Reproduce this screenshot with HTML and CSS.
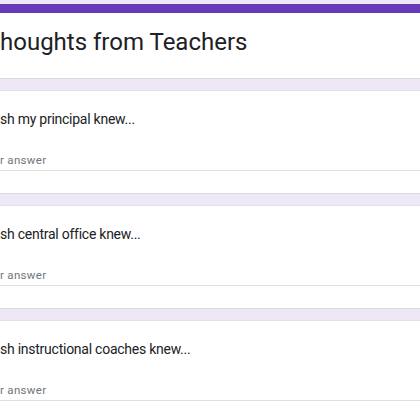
FILE: index.html
```html
<!DOCTYPE html>
<html>
<head>
<meta charset="utf-8">
<link rel="stylesheet" href="styles.css">
</head>
<body>
<main class="form">
  <section class="card header-card">
    <h1 class="title">houghts from Teachers</h1>
  </section>
  <section class="card question">
    <div class="q-text">sh my principal knew...</div>
    <div class="answer">r answer</div>
  </section>
  <section class="card question">
    <div class="q-text">sh central office knew...</div>
    <div class="answer">r answer</div>
  </section>
  <section class="card question">
    <div class="q-text">sh instructional coaches knew...</div>
    <div class="answer">r answer</div>
  </section>
</main>
</body>
</html>
```

FILE: styles.css
```css
html, body {
  margin: 0;
  padding: 0;
  background: #ede7f6;
  height: 100%;
  overflow: hidden;
}
.form {
  padding-top: 4px;
  display: flex;
  flex-direction: column;
  gap: 11px;
  font-family: Roboto, "Noto Sans", sans-serif;
}
.card {
  background: #fff;
  border-top: 1px solid #e4e2e8;
  border-bottom: 1px solid #dadce0;
}
.header-card {
  border-top: 9px solid #673ab7;
  height: 65px;
  box-sizing: content-box;
}
.title {
  margin: 0;
  padding-top: 14px;
  font-weight: 400;
  font-size: 24px;
  line-height: 30px;
  color: #202124;
}
.question {
  height: 104px;
  padding-top: 18px;
  box-sizing: border-box;
}
.q-text {
  font-size: 14px;
  line-height: 20px;
  letter-spacing: -0.25px;
  color: #202124;
}
.answer {
  margin-top: 23px;
  font-size: 11.5px;
  line-height: 16px;
  letter-spacing: 0.3px;
  color: #70757a;
  padding-bottom: 2px;
  border-bottom: 1px solid #e0e0e0;
}
```
